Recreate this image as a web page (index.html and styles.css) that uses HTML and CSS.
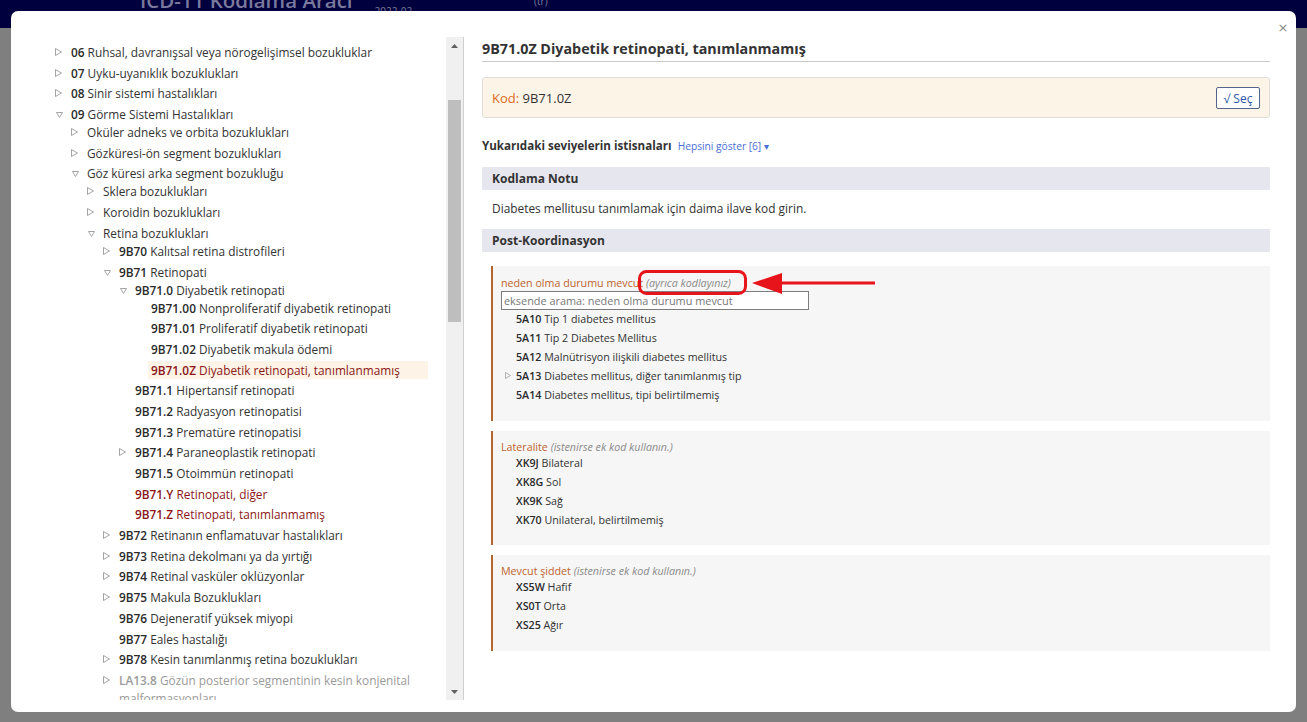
FILE: index.html
```html
<!DOCTYPE html>
<html lang="tr">
<head>
<meta charset="utf-8">
<title>ICD-11 Kodlama Aracı</title>
<link rel="stylesheet" href="styles.css">
</head>
<body>
<header class="topbar">
  <span class="app-title">ICD-11 Kodlama Aracı</span>
  <span class="app-version">2022-02</span>
  <span class="app-lang">(tr)</span>
</header>
<div class="backdrop"></div>

<div class="dialog">
  <button class="close" aria-label="Kapat">×</button>
  <div class="dialog-body">
    <aside class="left-pane">
      <div class="tree-view">
        <ul class="tree">
          <li><div class="row"><span class="tog"><svg viewBox="0 0 7 8"><polygon points="0.5,0.5 6.5,4 0.5,7.5"/></svg></span><span class="lbl"><b>06</b> Ruhsal, davranışsal veya nörogelişimsel bozukluklar</span></div></li>
          <li><div class="row"><span class="tog"><svg viewBox="0 0 7 8"><polygon points="0.5,0.5 6.5,4 0.5,7.5"/></svg></span><span class="lbl"><b>07</b> Uyku-uyanıklık bozuklukları</span></div></li>
          <li><div class="row"><span class="tog"><svg viewBox="0 0 7 8"><polygon points="0.5,0.5 6.5,4 0.5,7.5"/></svg></span><span class="lbl"><b>08</b> Sinir sistemi hastalıkları</span></div></li>
          <li><div class="row"><span class="tog down"><svg viewBox="0 0 7 6"><polygon points="0.5,0.5 6.5,0.5 3.5,5.5"/></svg></span><span class="lbl"><b>09</b> Görme Sistemi Hastalıkları</span></div>
            <ul>
              <li><div class="row"><span class="tog"><svg viewBox="0 0 7 8"><polygon points="0.5,0.5 6.5,4 0.5,7.5"/></svg></span><span class="lbl">Oküler adneks ve orbita bozuklukları</span></div></li>
              <li><div class="row"><span class="tog"><svg viewBox="0 0 7 8"><polygon points="0.5,0.5 6.5,4 0.5,7.5"/></svg></span><span class="lbl">Gözküresi-ön segment bozuklukları</span></div></li>
              <li><div class="row"><span class="tog down"><svg viewBox="0 0 7 6"><polygon points="0.5,0.5 6.5,0.5 3.5,5.5"/></svg></span><span class="lbl">Göz küresi arka segment bozukluğu</span></div>
                <ul>
                  <li><div class="row"><span class="tog"><svg viewBox="0 0 7 8"><polygon points="0.5,0.5 6.5,4 0.5,7.5"/></svg></span><span class="lbl">Sklera bozuklukları</span></div></li>
                  <li><div class="row"><span class="tog"><svg viewBox="0 0 7 8"><polygon points="0.5,0.5 6.5,4 0.5,7.5"/></svg></span><span class="lbl">Koroidin bozuklukları</span></div></li>
                  <li><div class="row"><span class="tog down"><svg viewBox="0 0 7 6"><polygon points="0.5,0.5 6.5,0.5 3.5,5.5"/></svg></span><span class="lbl">Retina bozuklukları</span></div>
                    <ul>
                      <li><div class="row"><span class="tog"><svg viewBox="0 0 7 8"><polygon points="0.5,0.5 6.5,4 0.5,7.5"/></svg></span><span class="lbl"><b>9B70</b> Kalıtsal retina distrofileri</span></div></li>
                      <li><div class="row"><span class="tog down"><svg viewBox="0 0 7 6"><polygon points="0.5,0.5 6.5,0.5 3.5,5.5"/></svg></span><span class="lbl"><b>9B71</b> Retinopati</span></div>
                        <ul>
                          <li><div class="row"><span class="tog down"><svg viewBox="0 0 7 6"><polygon points="0.5,0.5 6.5,0.5 3.5,5.5"/></svg></span><span class="lbl"><b>9B71.0</b> Diyabetik retinopati</span></div>
                            <ul>
                              <li><div class="row"><span class="tog"></span><span class="lbl"><b>9B71.00</b> Nonproliferatif diyabetik retinopati</span></div></li>
                              <li><div class="row"><span class="tog"></span><span class="lbl"><b>9B71.01</b> Proliferatif diyabetik retinopati</span></div></li>
                              <li><div class="row"><span class="tog"></span><span class="lbl"><b>9B71.02</b> Diyabetik makula ödemi</span></div></li>
                              <li><div class="row"><span class="tog"></span><span class="lbl selected residual"><b>9B71.0Z</b> Diyabetik retinopati, tanımlanmamış</span></div></li>
                            </ul>
                          </li>
                          <li><div class="row"><span class="tog"></span><span class="lbl"><b>9B71.1</b> Hipertansif retinopati</span></div></li>
                          <li><div class="row"><span class="tog"></span><span class="lbl"><b>9B71.2</b> Radyasyon retinopatisi</span></div></li>
                          <li><div class="row"><span class="tog"></span><span class="lbl"><b>9B71.3</b> Prematüre retinopatisi</span></div></li>
                          <li><div class="row"><span class="tog"><svg viewBox="0 0 7 8"><polygon points="0.5,0.5 6.5,4 0.5,7.5"/></svg></span><span class="lbl"><b>9B71.4</b> Paraneoplastik retinopati</span></div></li>
                          <li><div class="row"><span class="tog"></span><span class="lbl"><b>9B71.5</b> Otoimmün retinopati</span></div></li>
                          <li><div class="row"><span class="tog"></span><span class="lbl residual"><b>9B71.Y</b> Retinopati, diğer</span></div></li>
                          <li><div class="row"><span class="tog"></span><span class="lbl residual"><b>9B71.Z</b> Retinopati, tanımlanmamış</span></div></li>
                        </ul>
                      </li>
                      <li><div class="row"><span class="tog"><svg viewBox="0 0 7 8"><polygon points="0.5,0.5 6.5,4 0.5,7.5"/></svg></span><span class="lbl"><b>9B72</b> Retinanın enflamatuvar hastalıkları</span></div></li>
                      <li><div class="row"><span class="tog"><svg viewBox="0 0 7 8"><polygon points="0.5,0.5 6.5,4 0.5,7.5"/></svg></span><span class="lbl"><b>9B73</b> Retina dekolmanı ya da yırtığı</span></div></li>
                      <li><div class="row"><span class="tog"><svg viewBox="0 0 7 8"><polygon points="0.5,0.5 6.5,4 0.5,7.5"/></svg></span><span class="lbl"><b>9B74</b> Retinal vasküler oklüzyonlar</span></div></li>
                      <li><div class="row"><span class="tog"><svg viewBox="0 0 7 8"><polygon points="0.5,0.5 6.5,4 0.5,7.5"/></svg></span><span class="lbl"><b>9B75</b> Makula Bozuklukları</span></div></li>
                      <li><div class="row"><span class="tog"></span><span class="lbl"><b>9B76</b> Dejeneratif yüksek miyopi</span></div></li>
                      <li><div class="row"><span class="tog"></span><span class="lbl"><b>9B77</b> Eales hastalığı</span></div></li>
                      <li><div class="row"><span class="tog"><svg viewBox="0 0 7 8"><polygon points="0.5,0.5 6.5,4 0.5,7.5"/></svg></span><span class="lbl"><b>9B78</b> Kesin tanımlanmış retina bozuklukları</span></div></li>
                      <li><div class="row"><span class="tog"><svg viewBox="0 0 7 8"><polygon points="0.5,0.5 6.5,4 0.5,7.5"/></svg></span><span class="lbl foreign"><b>LA13.8</b> Gözün posterior segmentinin kesin konjenital malformasyonları</span></div></li>
                    </ul>
                  </li>
                </ul>
              </li>
            </ul>
          </li>
        </ul>
      </div>
      <div class="scrollbar">
        <span class="sb-arrow"><svg viewBox="0 0 7 4"><polygon points="0,4 7,4 3.5,0"/></svg></span>
        <span class="sb-gap-top"></span>
        <span class="sb-thumb"></span>
        <span class="sb-gap"></span>
        <span class="sb-arrow"><svg viewBox="0 0 7 4"><polygon points="0,0 7,0 3.5,4"/></svg></span>
      </div>
    </aside>

    <main class="right-pane">
      <h1 class="entity-title">9B71.0Z Diyabetik retinopati, tanımlanmamış</h1>
      <div class="code-box">
        <span class="code-line"><span class="code-key">Kod:</span> 9B71.0Z</span>
        <button class="select-btn">√ Seç</button>
      </div>
      <div class="exclusions">
        <span class="exc-title">Yukarıdaki seviyelerin istisnaları</span>
        <a class="show-all">Hepsini göster [6] ▾</a>
      </div>

      <h2 class="band">Kodlama Notu</h2>
      <p class="note">Diabetes mellitusu tanımlamak için daima ilave kod girin.</p>

      <h2 class="band">Post-Koordinasyon</h2>

      <section class="pc-box first">
        <div class="pc-label">neden olma durumu mevcut <i class="pc-hint">(ayrıca kodlayınız)</i></div>
        <div class="pc-search">eksende arama: neden olma durumu mevcut</div>
        <ul class="pc-list">
          <li><span class="pc-tog"></span><b>5A10</b> Tip 1 diabetes mellitus</li>
          <li><span class="pc-tog"></span><b>5A11</b> Tip 2 Diabetes Mellitus</li>
          <li><span class="pc-tog"></span><b>5A12</b> Malnütrisyon ilişkili diabetes mellitus</li>
          <li><span class="pc-tog"><svg viewBox="0 0 7 8"><polygon points="0.5,0.5 6.5,4 0.5,7.5"/></svg></span><b>5A13</b> Diabetes mellitus, diğer tanımlanmış tip</li>
          <li><span class="pc-tog"></span><b>5A14</b> Diabetes mellitus, tipi belirtilmemiş</li>
        </ul>
        <svg class="annotation" width="240" height="30" viewBox="0 0 240 30">
          <rect x="1.5" y="1.5" width="106" height="22" rx="7" ry="7" fill="none" stroke="#e8141c" stroke-width="3"/>
          <polygon points="114,13 144,3 144,24" fill="#e8141c"/>
          <rect x="140" y="11.5" width="97" height="3" fill="#e8141c"/>
        </svg>
      </section>

      <section class="pc-box">
        <div class="pc-label">Lateralite <i class="pc-hint">(istenirse ek kod kullanın.)</i></div>
        <ul class="pc-list">
          <li><span class="pc-tog"></span><b>XK9J</b> Bilateral</li>
          <li><span class="pc-tog"></span><b>XK8G</b> Sol</li>
          <li><span class="pc-tog"></span><b>XK9K</b> Sağ</li>
          <li><span class="pc-tog"></span><b>XK70</b> Unilateral, belirtilmemiş</li>
        </ul>
      </section>

      <section class="pc-box">
        <div class="pc-label">Mevcut şiddet <i class="pc-hint">(istenirse ek kod kullanın.)</i></div>
        <ul class="pc-list">
          <li><span class="pc-tog"></span><b>XS5W</b> Hafif</li>
          <li><span class="pc-tog"></span><b>XS0T</b> Orta</li>
          <li><span class="pc-tog"></span><b>XS25</b> Ağır</li>
        </ul>
      </section>
    </main>
  </div>
</div>
</body>
</html>
```

FILE: styles.css
```css
* { box-sizing: border-box; }

html, body {
  margin: 0;
  padding: 0;
  height: 100%;
}

body {
  background: #7f7f7f;
  font-family: "Open Sans", "Noto Sans", "Liberation Sans", sans-serif;
  color: #333;
  overflow: hidden;
}

/* dimmed page behind the dialog */
.topbar {
  height: 28px;
  background: #00003f;
  display: flex;
  align-items: flex-end;
  overflow: hidden;
}
.app-title {
  margin-left: 140px;
  font-size: 20.5px;
  line-height: 30px;
  margin-bottom: 13px;
  color: #7a7a9c;
  font-weight: 600;
  white-space: nowrap;
}
.app-version {
  margin-left: 22px;
  font-size: 10px;
  line-height: 10px;
  margin-bottom: 12px;
  color: #7a7a9c;
}
.app-lang {
  margin-left: 122px;
  font-size: 10px;
  line-height: 10px;
  margin-bottom: 22px;
  color: #7a7a9c;
}
.backdrop { height: calc(100% - 28px); }

/* modal dialog */
.dialog {
  position: absolute;
  left: 11px;
  top: 11px;
  width: 1285px;
  height: 701px;
  background: #fff;
  border-radius: 7px;
  overflow: hidden;
}
.close {
  position: absolute;
  right: 6px;
  top: 9px;
  border: 0;
  background: none;
  padding: 0;
  width: 14px;
  height: 16px;
  font-family: "DejaVu Sans", sans-serif;
  font-size: 13px;
  line-height: 16px;
  color: #8a8a8a;
  cursor: pointer;
}

.dialog-body {
  display: flex;
  padding-top: 26px;
  height: 100%;
}

/* left tree pane */
.left-pane {
  display: flex;
  width: 453px;
  height: 663px;
  border-right: 1px solid #cfcfcf;
  flex: none;
}
.tree-view {
  flex: 1;
  overflow: hidden;
  padding: 6px 18px 0 44px;
  font-size: 11.85px;
  line-height: 18px;
}
.tree, .tree ul {
  list-style: none;
  margin: 0;
  padding: 0;
}
.tree ul { padding-left: 16px; }
.tree li + li { margin-top: 2.7px; }
.row {
  display: flex;
  align-items: flex-start;
}
.tog {
  flex: none;
  width: 15px;
  height: 18px;
  display: flex;
  align-items: flex-start;
  padding-top: 5px;
}
.tog svg { width: 7px; height: 8px; }
.tog.down { padding-top: 7px; padding-left: 1px; }
.tog.down svg { width: 7px; height: 6px; }
.tog polygon, .pc-tog polygon {
  fill: none;
  stroke: #9a9a9a;
  stroke-width: 0.9;
}
.lbl {
  flex: 1;
  color: #333;
  padding-left: 1px;
}
.lbl b { font-weight: 600; color: #2a2a2a; }
.lbl.residual, .lbl.residual b { color: #8b1616; }
.lbl.selected {
  background: #fdf3e6;
  margin-left: -2px;
  padding-left: 3px;
}
.lbl.foreign, .lbl.foreign b { color: #9b9b9b; }

.scrollbar {
  flex: none;
  width: 17px;
  background: #f0f0f0;
  display: flex;
  flex-direction: column;
  align-items: center;
}
.sb-arrow {
  height: 17px;
  width: 17px;
  display: flex;
  align-items: center;
  justify-content: center;
}
.sb-arrow svg { width: 7px; height: 4px; }
.sb-arrow polygon { fill: #606060; }
.sb-gap-top { height: 46px; }
.sb-thumb {
  width: 13px;
  height: 222px;
  background: #bebebe;
}
.sb-gap { flex: 1; }

/* right details pane */
.right-pane {
  flex: none;
  width: 788px;
  margin-left: 18px;
  font-size: 12px;
}
.entity-title {
  margin: 2px 0 0;
  font-size: 14.3px;
  line-height: 20px;
  font-weight: 700;
  color: #333;
  padding-bottom: 2px;
  border-bottom: 1px solid #c8c8c8;
}
.code-box {
  margin-top: 15px;
  height: 41px;
  background: #fdf4e8;
  border: 1px solid #dedede;
  border-radius: 3px;
  display: flex;
  align-items: center;
  justify-content: space-between;
  padding: 0 9px 0 9px;
}
.code-line {
  font-size: 13px;
  color: #333;
}
.code-key { color: #e06a1c; }
.select-btn {
  height: 22px;
  width: 44px;
  background: #fff;
  border: 1px solid #53658a;
  border-radius: 2px;
  color: #2f56a8;
  font-family: inherit;
  font-size: 12px;
  padding: 0;
  margin-top: 1px;
}
.exclusions {
  margin-top: 19px;
  line-height: 18px;
}
.exc-title {
  font-weight: 700;
  font-size: 11.6px;
  color: #333;
}
.show-all {
  margin-left: 3px;
  font-size: 10.2px;
  color: #4a6ed6;
}
.band {
  margin: 12px 0 0;
  height: 23px;
  background: #e6e6ef;
  font-size: 12px;
  line-height: 23px;
  font-weight: 700;
  padding-left: 10px;
  color: #333;
}
.note {
  margin: 0;
  padding: 9px 10px 0;
  line-height: 18px;
  font-size: 11.9px;
}
.note + .band { margin-top: 12px; }

.pc-box {
  position: relative;
  margin: 10px 0 0 9px;
  background: #f6f6f6;
  border-left: 2px solid #b5652f;
  padding: 10px 0 15.5px 8px;
  font-size: 10.7px;
}
.pc-box.first { margin-top: 14px; }
.pc-label {
  line-height: 13px;
  color: #c0642e;
}
.pc-box.first .pc-label { line-height: 14px; }
.pc-hint {
  color: #8a8a8a;
}
.pc-search {
  margin-top: 1px;
  width: 308px;
  height: 19px;
  border: 1px solid #7d7d7d;
  background: #fff;
  line-height: 17px;
  padding-left: 2px;
  color: #777;
  font-size: 10.9px;
  white-space: nowrap;
}
.pc-list {
  list-style: none;
  margin: 0;
  padding: 0;
}
.pc-list li {
  line-height: 19px;
  display: flex;
  align-items: flex-start;
  color: #333;
  white-space: pre;
}
.pc-list b { font-weight: 600; color: #2a2a2a; }
.pc-tog {
  width: 15px;
  height: 19px;
  padding-left: 4px;
  padding-top: 5px;
  flex: none;
}
.pc-tog svg { width: 6px; height: 7px; display: block; }

.annotation {
  position: absolute;
  left: 145px;
  top: 4px;
}
```
